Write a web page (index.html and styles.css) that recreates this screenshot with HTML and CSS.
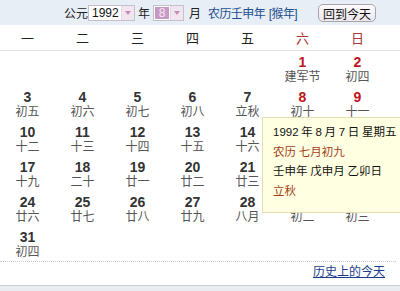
FILE: index.html
```html
<!DOCTYPE html>
<html lang="zh-CN">
<head>
  <meta charset="UTF-8">
  <title>万年历</title>
  <link rel="stylesheet" href="styles.css">
</head>
<body>
  <div class="calendar">
    <!-- top bar: year / month pickers -->
    <div class="topbar">
      <span class="label">公元</span>
      <div class="picker year-picker">
        <span class="picker-value">1992</span>
        <span class="picker-arrow"></span>
      </div>
      <span class="label">年</span>
      <div class="picker month-picker">
        <span class="picker-value selected">8</span>
        <span class="picker-arrow"></span>
      </div>
      <span class="label month-label">月</span>
      <span class="lunar-year">农历壬申年 [猴年]</span>
      <button class="today-btn">回到今天</button>
    </div>

    <div class="weekdays">
      <span>一</span><span>二</span><span>三</span><span>四</span><span>五</span>
      <span class="weekend">六</span><span class="weekend">日</span>
    </div>

    <div id="days" class="days"></div>

    <div class="footer">
      <a href="#" class="history-link">历史上的今天</a>
    </div>

    <!-- tooltip for the hovered day -->
    <div class="day-tip">
      <div>1992 年 8 月 7 日 星期五</div>
      <div class="tip-lunar">农历 七月初九</div>
      <div>壬申年 戊申月 乙卯日</div>
      <div class="tip-lunar">立秋</div>
    </div>
  </div>

  <script>
    const lunar = ['建军节', '初四', '初五', '初六', '初七', '初八', '立秋', '初十', '十一', '十二',
      '十三', '十四', '十五', '十六', '十七', '十八', '十九', '二十', '廿一', '廿二',
      '廿三', '廿四', '廿五', '廿六', '廿七', '廿八', '廿九', '八月', '初二', '初三', '初四'];
    const days = document.getElementById('days');
    const offset = 5; // 1992-08-01 is a Saturday

    for (let i = 0; i < offset; i++) {
      days.appendChild(document.createElement('div'));
    }

    lunar.forEach(function(text, i) {
      const cell = document.createElement('div');
      cell.classList.add('day');
      const col = (offset + i) % 7;
      if (col >= 5) cell.classList.add('weekend');
      cell.innerHTML = `
        <div class="day-num">${i + 1}</div>
        <div class="day-lunar">${text}</div>
      `;
      days.appendChild(cell);
    });
  </script>
</body>
</html>
```

FILE: styles.css
```css
body {
  margin: 0;
  font-family: "Liberation Sans", Arial, "Noto Sans CJK SC", sans-serif;
  font-size: 12px;
  color: #333;
  background-color: #e9edf2;
}

.calendar {
  position: relative;
  width: 400px;
  height: 285px;
  background-color: #fff;
  border-bottom: 1px solid #c9cdd3;
}

/* Top bar */
.topbar {
  display: flex;
  align-items: center;
  height: 25px;
  padding: 0 24px 0 64px;
  background-color: #e8eef6;
  box-sizing: border-box;
  white-space: nowrap;
}

.label {
  color: #222;
}

.picker {
  display: flex;
  height: 16px;
  margin: 0 3px 0 0;
  border: 1px solid #c4c0cc;
  background-color: #fff;
  box-sizing: border-box;
}

.year-picker {
  width: 47px;
}

.month-picker {
  width: 31px;
  margin-left: 3px;
}

.picker-value {
  flex: 1;
  padding-left: 3px;
  line-height: 14px;
  color: #111;
}

.picker-value.selected {
  margin: 1px;
  padding: 0;
  background-color: #c79ac6;
  color: #f4e8f4;
  text-align: center;
  line-height: 12px;
}

.picker-arrow {
  position: relative;
  width: 12px;
  background-color: #f1e6f0;
  border-left: 1px solid #e4d8e4;
}

.picker-arrow::after {
  content: "";
  position: absolute;
  left: 3px;
  top: 5px;
  border-left: 3.5px solid transparent;
  border-right: 3.5px solid transparent;
  border-top: 4px solid #c68cb6;
}

.month-label {
  margin-left: 2px;
}

.lunar-year {
  margin-left: 7px;
  color: #1f4f8f;
  letter-spacing: -0.6px;
  word-spacing: 1px;
}

.today-btn {
  margin-left: auto;
  width: 58px;
  height: 18px;
  padding: 0;
  font-family: inherit;
  font-size: 12px;
  color: #111;
  border: 1px solid #a9a3aa;
  border-radius: 5px;
  background: linear-gradient(#fdfafd, #ece6ee);
}

/* Week header and days */
.weekdays,
.days {
  display: grid;
  grid-template-columns: repeat(7, 55px);
}

.weekdays {
  height: 26px;
  align-items: center;
  border-bottom: 1px solid #e2e2e2;
  box-sizing: border-box;
  font-size: 13px;
  color: #222;
}

.weekdays span {
  text-align: center;
}

.weekdays .weekend {
  color: #a33;
}

.days {
  grid-auto-rows: 35px;
  height: 210px;
}

.day {
  padding-top: 3px;
  text-align: center;
}

.day-num {
  font-size: 14px;
  font-weight: bold;
  line-height: 16px;
  color: #333;
}

.day.weekend .day-num {
  color: #c0141c;
}

.day-lunar {
  line-height: 15px;
  color: #555;
}

/* Footer */
.footer {
  height: 23px;
  margin-right: 4px;
  padding-right: 11px;
  border-top: 1px dotted #c8c8c8;
  box-sizing: border-box;
  text-align: right;
  line-height: 21px;
}

.history-link {
  color: #1d3d8c;
  text-decoration: underline;
}

/* Tooltip */
.day-tip {
  position: absolute;
  left: 262px;
  top: 117px;
  width: 138px;
  height: 96px;
  padding: 5px 0 0 10px;
  box-sizing: border-box;
  background-color: #ffffe1;
  border: 1px solid #e4ddb0;
  border-right: none;
  font-size: 11.5px;
  word-spacing: -0.5px;
  line-height: 19.5px;
  white-space: nowrap;
  color: #111;
}

.tip-lunar {
  color: #a4401c;
}
```
